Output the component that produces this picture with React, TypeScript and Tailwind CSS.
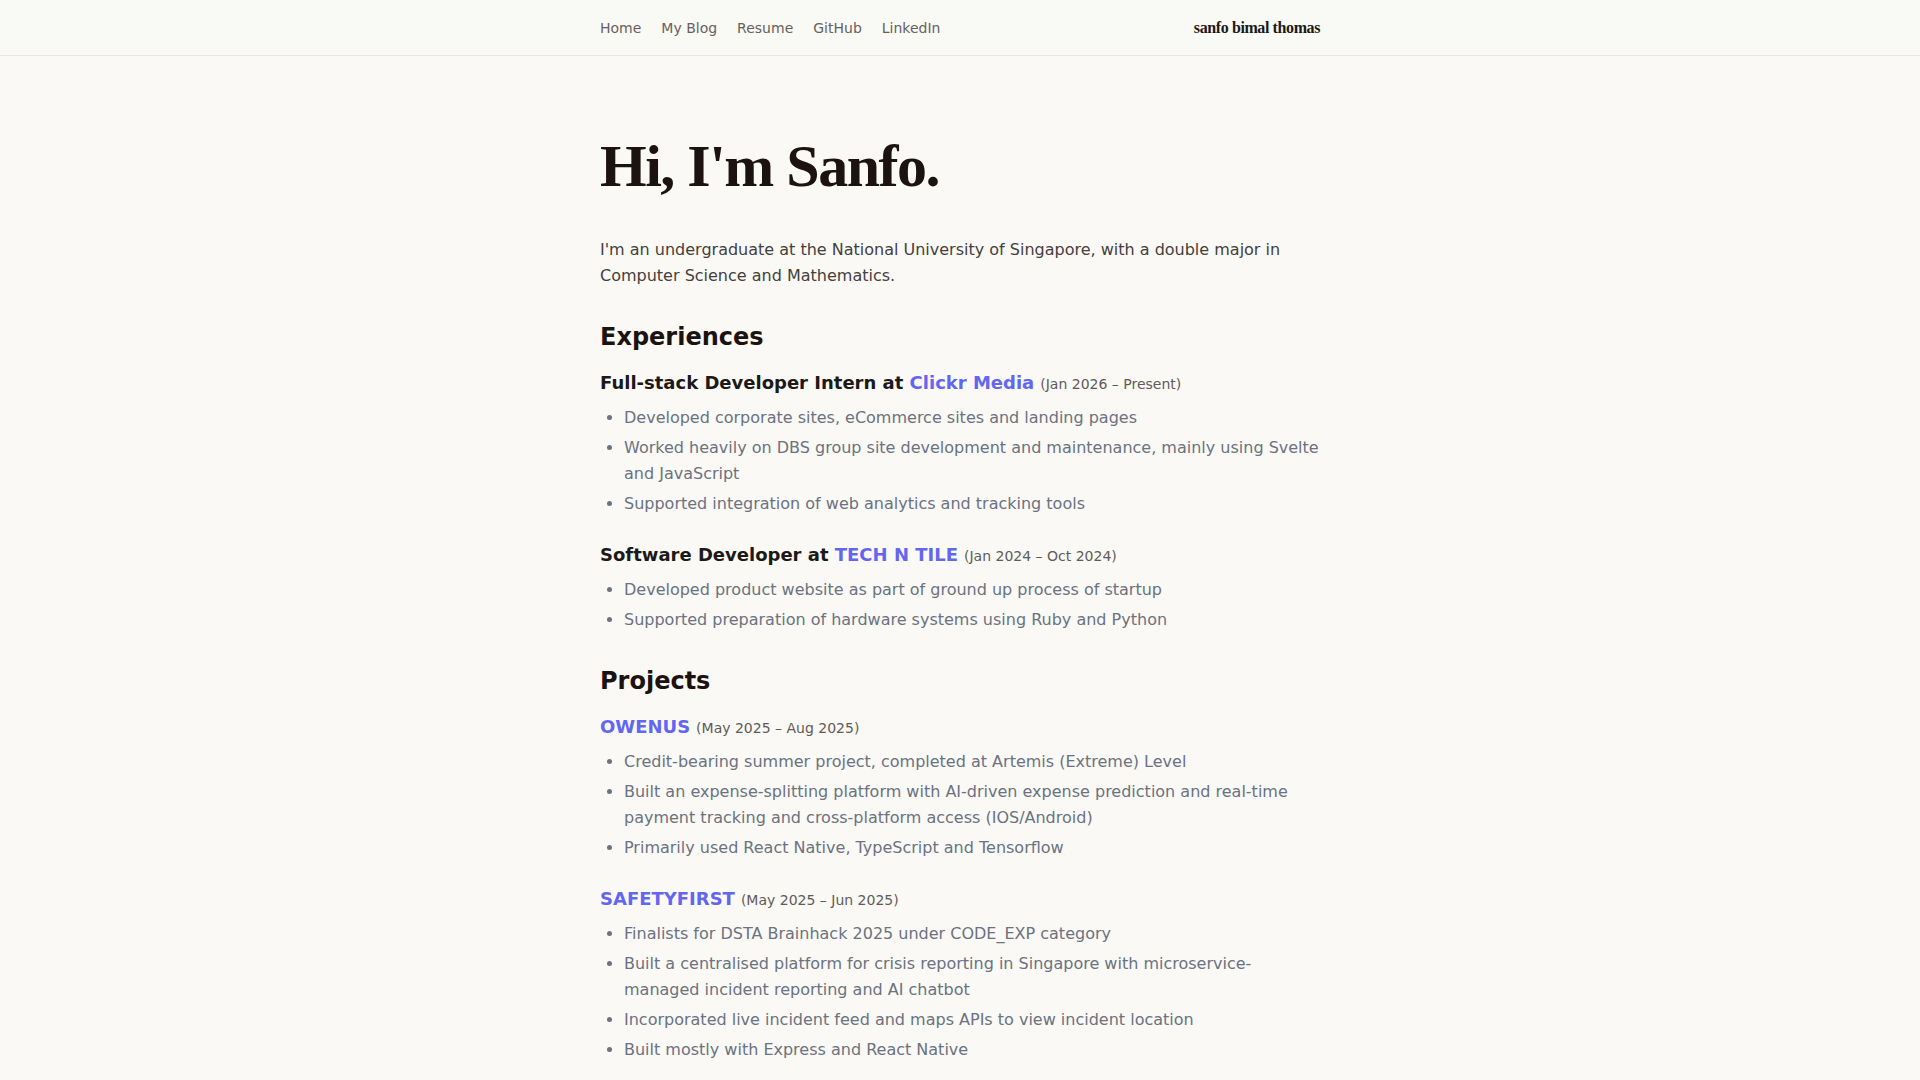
const navLinks = ["Home", "My Blog", "Resume", "GitHub", "LinkedIn"];

type Entry = {
  title?: string;
  org: string;
  dates: string;
  points: string[];
};

const experiences: Entry[] = [
  {
    title: "Full-stack Developer Intern at",
    org: "Clickr Media",
    dates: "(Jan 2026 – Present)",
    points: [
      "Developed corporate sites, eCommerce sites and landing pages",
      "Worked heavily on DBS group site development and maintenance, mainly using Svelte and JavaScript",
      "Supported integration of web analytics and tracking tools",
    ],
  },
  {
    title: "Software Developer at",
    org: "TECH N TILE",
    dates: "(Jan 2024 – Oct 2024)",
    points: [
      "Developed product website as part of ground up process of startup",
      "Supported preparation of hardware systems using Ruby and Python",
    ],
  },
];

const projects: Entry[] = [
  {
    org: "OWENUS",
    dates: "(May 2025 – Aug 2025)",
    points: [
      "Credit-bearing summer project, completed at Artemis (Extreme) Level",
      "Built an expense-splitting platform with AI-driven expense prediction and real-time payment tracking and cross-platform access (IOS/Android)",
      "Primarily used React Native, TypeScript and Tensorflow",
    ],
  },
  {
    org: "SAFETYFIRST",
    dates: "(May 2025 – Jun 2025)",
    points: [
      "Finalists for DSTA Brainhack 2025 under CODE_EXP category",
      "Built a centralised platform for crisis reporting in Singapore with microservice-managed incident reporting and AI chatbot",
      "Incorporated live incident feed and maps APIs to view incident location",
      "Built mostly with Express and React Native",
    ],
  },
];

function EntryBlock({ entry, first }: { entry: Entry; first: boolean }) {
  return (
    <div className={first ? "mt-4" : "mt-6"}>
      <h3 className="text-lg font-bold text-[#1c1917]">
        {entry.title && <span>{entry.title} </span>}
        <a href="#" className="text-[#6366f1]">
          {entry.org}
        </a>
        <span className="ml-1.5 text-sm font-normal text-[#615b56]">{entry.dates}</span>
      </h3>
      <ul className="mt-2 list-disc space-y-1 pl-6 text-[#6b7280] leading-relaxed">
        {entry.points.map((p) => (
          <li key={p}>{p}</li>
        ))}
      </ul>
    </div>
  );
}

export default function App() {
  return (
    <div className="min-h-screen bg-[#faf9f6] font-['DejaVu_Sans',sans-serif]">
      <nav className="h-14 border-b border-[#e3e6ee] bg-[#f9f9f6]">
        <div className="mx-auto flex h-full max-w-[720px] items-center justify-between">
          <div className="flex gap-5 text-sm text-[#67615c]">
            {navLinks.map((l) => (
              <a key={l} href="#">
                {l}
              </a>
            ))}
          </div>
          <span className="font-['Liberation_Serif',serif] text-base font-bold tracking-tight text-[#1c1917]">
            sanfo bimal thomas
          </span>
        </div>
      </nav>

      <main className="mx-auto max-w-[720px] pt-20 pb-16">
        <h1 className="font-['Liberation_Serif',serif] text-6xl leading-none font-bold tracking-tight text-[#1c1210]">
          Hi, I'm Sanfo.
        </h1>

        <p className="mt-[41px] leading-relaxed text-[#44403c]">
          I'm an undergraduate at the National University of Singapore, with a double major in Computer Science and
          Mathematics.
        </p>

        <section className="mt-8">
          <h2 className="text-2xl font-bold text-[#1c1210]">Experiences</h2>
          {experiences.map((e, i) => (
            <EntryBlock key={e.org} entry={e} first={i === 0} />
          ))}
        </section>

        <section className="mt-8">
          <h2 className="text-2xl font-bold text-[#1c1210]">Projects</h2>
          {projects.map((e, i) => (
            <EntryBlock key={e.org} entry={e} first={i === 0} />
          ))}
        </section>
      </main>
    </div>
  );
}
